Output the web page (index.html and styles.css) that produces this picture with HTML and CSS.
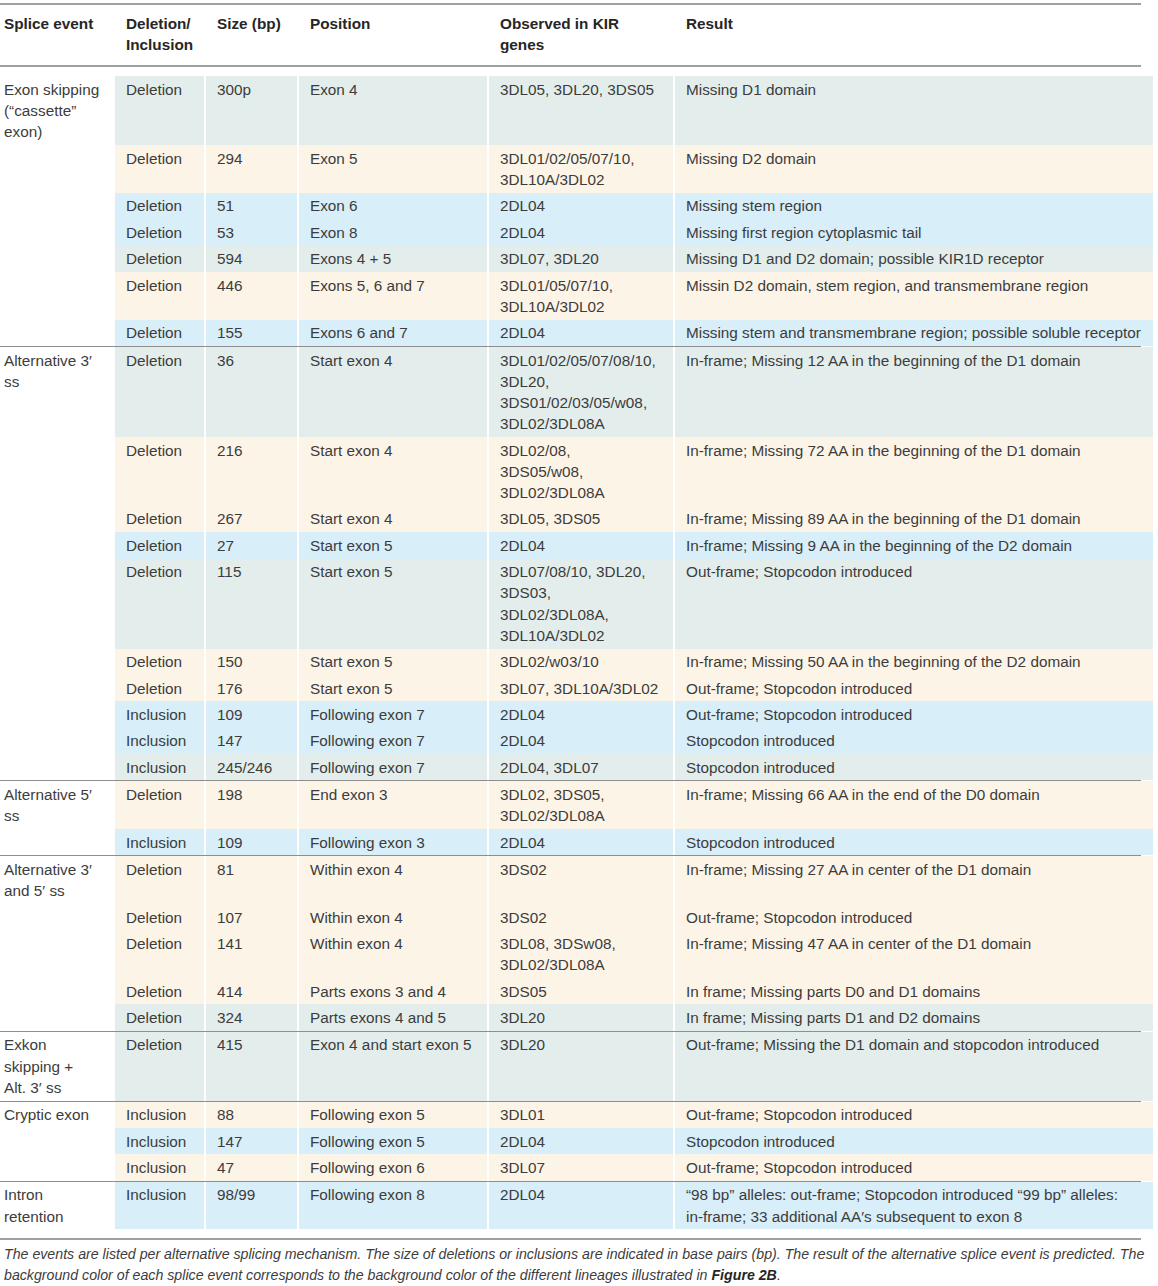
FILE: index.html
```html
<!DOCTYPE html>
<html lang="en">
<head>
<meta charset="utf-8">
<title>Alternative splice events in KIR genes</title>
<link rel="stylesheet" href="styles.css">
</head>
<body>
<div class="page">
<table class="splice">
<colgroup>
<col class="c1"><col class="c2"><col class="c3"><col class="c4"><col class="c5"><col class="c6">
</colgroup>
<thead>
<tr class="rule"><td colspan="6"><div class="hr"></div></td></tr>
<tr class="head">
<th>Splice event</th>
<th>Deletion/<br>Inclusion</th>
<th>Size (bp)</th>
<th>Position</th>
<th>Observed in KIR<br>genes</th>
<th>Result</th>
</tr>
<tr class="rule"><td colspan="6"><div class="hr"></div></td></tr>
<tr class="gap"><td colspan="6"></td></tr>
</thead>
<tbody>
<tr class="teal"><td class="ev">Exon skipping<br>(“cassette”<br>exon)</td><td>Deletion</td><td>300p</td><td>Exon 4</td><td>3DL05, 3DL20, 3DS05</td><td>Missing D1 domain</td></tr>
<tr class="peach"><td class="ev"></td><td>Deletion</td><td>294</td><td>Exon 5</td><td>3DL01/02/05/07/10,<br>3DL10A/3DL02</td><td>Missing D2 domain</td></tr>
<tr class="blue"><td class="ev"></td><td>Deletion</td><td>51</td><td>Exon 6</td><td>2DL04</td><td>Missing stem region</td></tr>
<tr class="blue"><td class="ev"></td><td>Deletion</td><td>53</td><td>Exon 8</td><td>2DL04</td><td>Missing first region cytoplasmic tail</td></tr>
<tr class="teal"><td class="ev"></td><td>Deletion</td><td>594</td><td>Exons 4 + 5</td><td>3DL07, 3DL20</td><td>Missing D1 and D2 domain; possible KIR1D receptor</td></tr>
<tr class="peach"><td class="ev"></td><td>Deletion</td><td>446</td><td>Exons 5, 6 and 7</td><td>3DL01/05/07/10,<br>3DL10A/3DL02</td><td>Missin D2 domain, stem region, and transmembrane region</td></tr>
<tr class="blue"><td class="ev"></td><td>Deletion</td><td>155</td><td>Exons 6 and 7</td><td>2DL04</td><td>Missing stem and transmembrane region; possible soluble receptor</td></tr>
<tr class="rule"><td colspan="6"><div class="hr thin"></div></td></tr>

<tr class="teal"><td class="ev">Alternative 3′<br>ss</td><td>Deletion</td><td>36</td><td>Start exon 4</td><td>3DL01/02/05/07/08/10,<br>3DL20,<br>3DS01/02/03/05/w08,<br>3DL02/3DL08A</td><td>In-frame; Missing 12 AA in the beginning of the D1 domain</td></tr>
<tr class="peach"><td class="ev"></td><td>Deletion</td><td>216</td><td>Start exon 4</td><td>3DL02/08,<br>3DS05/w08,<br>3DL02/3DL08A</td><td>In-frame; Missing 72 AA in the beginning of the D1 domain</td></tr>
<tr class="peach"><td class="ev"></td><td>Deletion</td><td>267</td><td>Start exon 4</td><td>3DL05, 3DS05</td><td>In-frame; Missing 89 AA in the beginning of the D1 domain</td></tr>
<tr class="blue"><td class="ev"></td><td>Deletion</td><td>27</td><td>Start exon 5</td><td>2DL04</td><td>In-frame; Missing 9 AA in the beginning of the D2 domain</td></tr>
<tr class="teal"><td class="ev"></td><td>Deletion</td><td>115</td><td>Start exon 5</td><td>3DL07/08/10, 3DL20,<br>3DS03,<br>3DL02/3DL08A,<br>3DL10A/3DL02</td><td>Out-frame; Stopcodon introduced</td></tr>
<tr class="peach"><td class="ev"></td><td>Deletion</td><td>150</td><td>Start exon 5</td><td>3DL02/w03/10</td><td>In-frame; Missing 50 AA in the beginning of the D2 domain</td></tr>
<tr class="peach"><td class="ev"></td><td>Deletion</td><td>176</td><td>Start exon 5</td><td>3DL07, 3DL10A/3DL02</td><td>Out-frame; Stopcodon introduced</td></tr>
<tr class="blue"><td class="ev"></td><td>Inclusion</td><td>109</td><td>Following exon 7</td><td>2DL04</td><td>Out-frame; Stopcodon introduced</td></tr>
<tr class="blue"><td class="ev"></td><td>Inclusion</td><td>147</td><td>Following exon 7</td><td>2DL04</td><td>Stopcodon introduced</td></tr>
<tr class="teal"><td class="ev"></td><td>Inclusion</td><td>245/246</td><td>Following exon 7</td><td>2DL04, 3DL07</td><td>Stopcodon introduced</td></tr>
<tr class="rule"><td colspan="6"><div class="hr thin"></div></td></tr>

<tr class="peach"><td class="ev">Alternative 5′<br>ss</td><td>Deletion</td><td>198</td><td>End exon 3</td><td>3DL02, 3DS05,<br>3DL02/3DL08A</td><td>In-frame; Missing 66 AA in the end of the D0 domain</td></tr>
<tr class="blue"><td class="ev"></td><td>Inclusion</td><td>109</td><td>Following exon 3</td><td>2DL04</td><td>Stopcodon introduced</td></tr>
<tr class="rule"><td colspan="6"><div class="hr thin"></div></td></tr>

<tr class="peach"><td class="ev">Alternative 3′<br>and 5′ ss</td><td>Deletion</td><td>81</td><td>Within exon 4</td><td>3DS02</td><td>In-frame; Missing 27 AA in center of the D1 domain</td></tr>
<tr class="peach"><td class="ev"></td><td>Deletion</td><td>107</td><td>Within exon 4</td><td>3DS02</td><td>Out-frame; Stopcodon introduced</td></tr>
<tr class="peach"><td class="ev"></td><td>Deletion</td><td>141</td><td>Within exon 4</td><td>3DL08, 3DSw08,<br>3DL02/3DL08A</td><td>In-frame; Missing 47 AA in center of the D1 domain</td></tr>
<tr class="peach"><td class="ev"></td><td>Deletion</td><td>414</td><td>Parts exons 3 and 4</td><td>3DS05</td><td>In frame; Missing parts D0 and D1 domains</td></tr>
<tr class="teal"><td class="ev"></td><td>Deletion</td><td>324</td><td>Parts exons 4 and 5</td><td>3DL20</td><td>In frame; Missing parts D1 and D2 domains</td></tr>
<tr class="rule"><td colspan="6"><div class="hr thin"></div></td></tr>

<tr class="teal"><td class="ev">Exkon<br>skipping +<br>Alt. 3′ ss</td><td>Deletion</td><td>415</td><td>Exon 4 and start exon 5</td><td>3DL20</td><td>Out-frame; Missing the D1 domain and stopcodon introduced</td></tr>
<tr class="rule"><td colspan="6"><div class="hr thin"></div></td></tr>

<tr class="peach"><td class="ev">Cryptic exon</td><td>Inclusion</td><td>88</td><td>Following exon 5</td><td>3DL01</td><td>Out-frame; Stopcodon introduced</td></tr>
<tr class="blue"><td class="ev"></td><td>Inclusion</td><td>147</td><td>Following exon 5</td><td>2DL04</td><td>Stopcodon introduced</td></tr>
<tr class="peach"><td class="ev"></td><td>Inclusion</td><td>47</td><td>Following exon 6</td><td>3DL07</td><td>Out-frame; Stopcodon introduced</td></tr>
<tr class="rule"><td colspan="6"><div class="hr thin"></div></td></tr>

<tr class="blue"><td class="ev">Intron<br>retention</td><td>Inclusion</td><td>98/99</td><td>Following exon 8</td><td>2DL04</td><td>“98 bp” alleles: out-frame; Stopcodon introduced “99 bp” alleles:<br>in-frame; 33 additional AA′s subsequent to exon 8</td></tr>
<tr class="gap-end"><td colspan="6"></td></tr>
<tr class="rule"><td colspan="6"><div class="hr"></div></td></tr>
</tbody>
</table>
<p class="note">The events are listed per alternative splicing mechanism. The size of deletions or inclusions are indicated in base pairs (bp). The result of the alternative splice event is predicted. The<br>background color of each splice event corresponds to the background color of the different lineages illustrated in <b>Figure 2B</b>.</p>
</div>
</body>
</html>
```

FILE: styles.css
```css
html, body {
  margin: 0;
  padding: 0;
  background: #ffffff;
}

body {
  padding-top: 3px;
  font-family: "Liberation Sans", Arial, sans-serif;
  color: #3c3c3c;
}

.page {
  width: 1153px;
}

.splice {
  width: 100%;
  border-collapse: collapse;
  table-layout: fixed;
  font-size: 15.3px;
  line-height: 21.2px;
}

.c1 { width: 114px; }
.c2 { width: 91px; }
.c3 { width: 93px; }
.c4 { width: 190px; }
.c5 { width: 186px; }
.c6 { width: auto; }

.splice th,
.splice td {
  text-align: left;
  vertical-align: top;
  padding: 2.6px 6px 2.6px 11px;
  border-left: 2px solid #ffffff;
  white-space: nowrap;
}

.splice th:first-child,
.splice td.ev {
  border-left: 0;
  padding-left: 4px;
  background: #ffffff;
}

.head th {
  font-weight: bold;
  color: #262626;
  padding-top: 7.5px;
  padding-bottom: 10.5px;
}

.rule td {
  padding: 0;
  border-left: 0;
}

.hr {
  height: 2px;
  margin-right: 12px;
  background: #a0a0a0;
}

.hr.thin {
  height: 1px;
  background: #8e8e8e;
}

.gap td {
  height: 9px;
  padding: 0;
  border-left: 0;
}

.gap-end td {
  height: 9px;
  padding: 0;
  border-left: 0;
}

.teal td { background: #e3eeec; }
.peach td { background: #fdf4e8; }
.blue td { background: #d8eef9; }

.note {
  margin: 0;
  padding: 4px 0 0 4px;
  font-style: italic;
  font-size: 14.2px;
  line-height: 21px;
  color: #3c3c3c;
  white-space: nowrap;
}

.note b {
  font-weight: bold;
  color: #262626;
}
```
